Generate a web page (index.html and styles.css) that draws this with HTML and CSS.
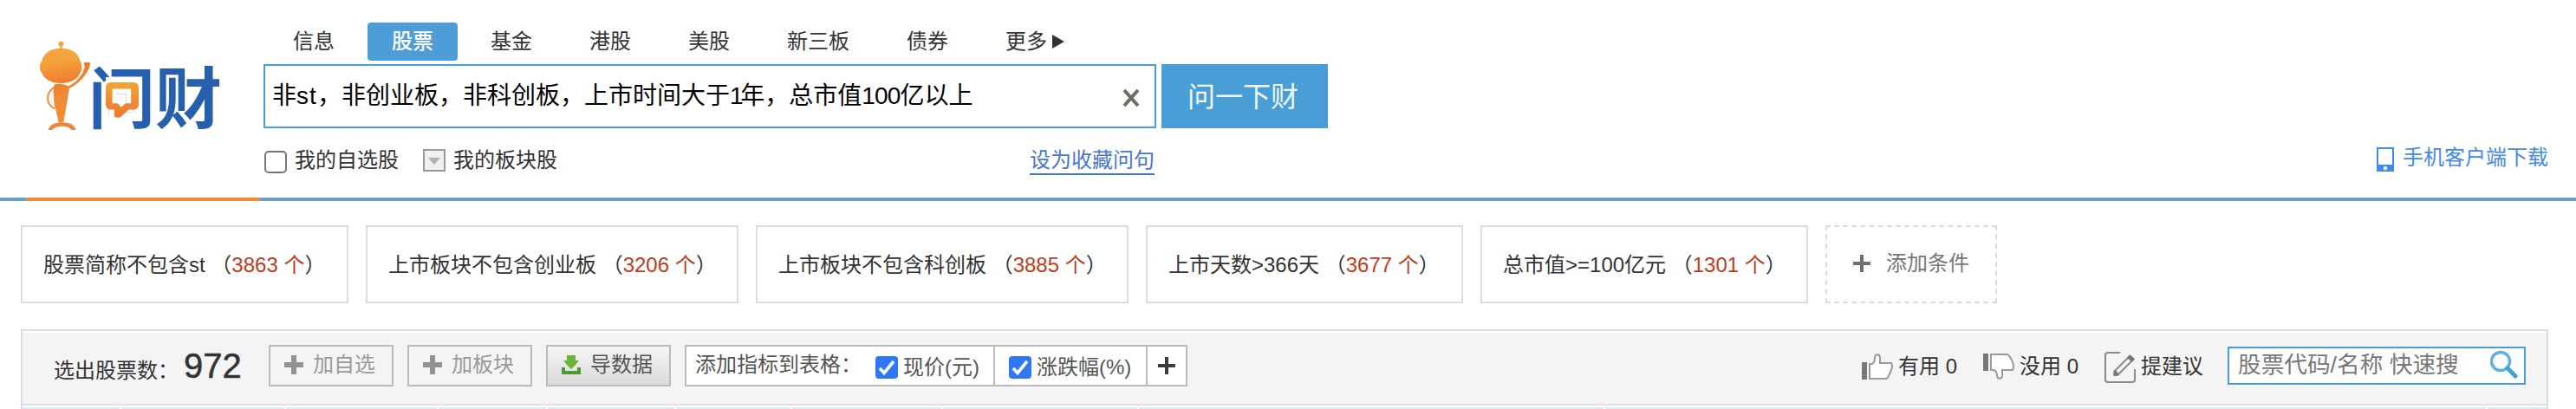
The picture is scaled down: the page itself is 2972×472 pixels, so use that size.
FILE: index.html
```html
<!DOCTYPE html>
<html lang="zh-CN">
<head>
<meta charset="utf-8">
<title>问财</title>
<link rel="stylesheet" href="styles.css">
</head>
<body>
<header class="header">
  <a class="logo">
    <svg class="logo-mascot" viewBox="138 138 180 312">
      <defs>
        <linearGradient id="head" x1="0.4" y1="0" x2="0.6" y2="1"><stop offset="0.35" stop-color="#f4a43a"/><stop offset="1" stop-color="#ef7a30"/></linearGradient>
        <linearGradient id="body" x1="0" y1="0" x2="0.3" y2="1"><stop offset="0.3" stop-color="#ee7a30"/><stop offset="0.6" stop-color="#f28c34"/></linearGradient>
      </defs>
      <circle cx="211" cy="152" r="9" fill="#f4a43a"/>
      <path d="M211 155v16" stroke="#f4a43a" stroke-width="6"/>
      <path d="M144 212C152 182 176 167 211 167s60 15 67 45c7 8 7 32 0 40-10 24-35 36-67 36s-57-12-67-36c-8-8-8-32 0-40z" fill="url(#head)"/>
      <path d="M190 292q26-5 48 6C270 280 290 254 293 230l-3-12q8-5 22-1c0 26-30 70-72 89l-20 118h-18C198 386 184 366 186 330q-4-26 4-38z" fill="url(#body)"/>
      <path d="M190 300c-34 22-32 62 0 76" fill="none" stroke="#f28c34" stroke-width="6"/>
      <path d="M167 450c4-16 22-26 48-26s44 10 48 26h-14c-8-9-18-13-34-13s-28 4-36 13z" fill="#f08633"/>
    </svg>
    <span class="logo-name"><span class="logo-wen">问</span><span class="logo-cai">财</span></span>
    <svg class="logo-bubble" viewBox="366 282 120 130">
      <defs><linearGradient id="bubble" x1="0" y1="0" x2="0" y2="1"><stop offset="0.1" stop-color="#f3a037"/><stop offset="0.9" stop-color="#ee7a30"/></linearGradient></defs>
      <path fill="url(#bubble)" fill-rule="evenodd" d="M386 282h80q20 0 20 20v60q0 20-20 20h-16l-32 28q-21 5-21-10v-18h-11q-20 0-20-20v-60q0-20 20-20zM390 306v53h20l12 14 16-14h20v-53z"/>
    </svg>
  </a>
  <div class="search">
    <nav class="tabs">
      <a class="tab">信息</a><a class="tab tab-active">股票</a><a class="tab">基金</a><a class="tab">港股</a><a class="tab">美股</a><a class="tab">新三板</a><a class="tab">债券</a><a class="tab">更多<i class="tab-arrow"></i></a>
    </nav>
    <div class="search-row">
      <div class="query">
        <span>非<span class="query-latin">st</span>，非创业板，非科创板，上市时间大于<span class="query-one">1</span>年，总市值<span class="query-num">100</span>亿以上</span>
        <svg class="clear" viewBox="0 0 22 22"><path d="M3 2l16 18M19 2L3 20" stroke="#6b6b60" stroke-width="4"/></svg>
      </div>
      <div class="ask">问一下财</div>
    </div>
    <div class="options">
      <i class="box"></i><span class="opt-self">我的自选股</span>
      <i class="drop"></i><span>我的板块股</span>
      <a class="fav">设为收藏问句</a>
    </div>
  </div>
  <a class="mobile">
    <svg class="phone" viewBox="0 0 20 28"><path fill="#4289ee" d="M0 0h20v28H0z"/><path fill="#fff" d="M2 2h16v18H2z"/><circle cx="10" cy="24" r="2.2" fill="#fff"/></svg>手机客户端下载
  </a>
</header>
<div class="rule"><i class="rule-accent"></i></div>

<section class="conditions">
  <div class="cond cond-name">股票简称不包含st&nbsp;（<b>3863 个</b>）</div>
  <div class="cond cond-board">上市板块不包含创业板&nbsp;（<b>3206 个</b>）</div>
  <div class="cond cond-board">上市板块不包含科创板&nbsp;（<b>3885 个</b>）</div>
  <div class="cond cond-days">上市天数&gt;366天&nbsp;（<b>3677 个</b>）</div>
  <div class="cond cond-cap">总市值&gt;=100亿元&nbsp;（<b>1301 个</b>）</div>
  <div class="cond cond-add"><svg class="plus-thin" viewBox="0 0 20 20"><path d="M10 0v20M0 10h20" stroke="#6e6e6e" stroke-width="4"/></svg>添加条件</div>
</section>

<section class="panel">
  <div class="toolbar">
    <span class="count-label">选出股票数：</span><span class="count">972</span>
    <div class="btn btn-off"><svg class="icon" viewBox="0 0 22 22"><path d="M11 0v22M0 11h22" stroke="#929292" stroke-width="6"/></svg>加自选</div>
    <div class="btn btn-off"><svg class="icon" viewBox="0 0 22 22"><path d="M11 0v22M0 11h22" stroke="#929292" stroke-width="6"/></svg>加板块</div>
    <div class="btn btn-export"><svg class="icon" viewBox="0 0 22 22"><path d="M0 14h4v4h14v-4h4v8H0z" fill="#4d9a2c"/><path d="M6 0h10v6h4l-4 5-5 5-5-5-4-5h4z" fill="#6cb53c"/></svg>导数据</div>
    <div class="metrics">
      <div class="metric metric-price"><span class="metric-label">添加指标到表格：</span><svg class="check" viewBox="0 0 26 26"><rect width="26" height="26" rx="4" fill="#2e78f6"/><path d="M5 14l5 5.5L21 6" fill="none" stroke="#fff" stroke-width="3.6"/></svg><span class="metric-name">现价(元)</span></div>
      <div class="metric metric-change"><svg class="check" viewBox="0 0 26 26"><rect width="26" height="26" rx="4" fill="#2e78f6"/><path d="M5 14l5 5.5L21 6" fill="none" stroke="#fff" stroke-width="3.6"/></svg><span class="metric-name">涨跌幅(%)</span></div>
      <div class="metric metric-plus"><svg class="plus-thin" viewBox="0 0 20 20"><path d="M10 0v20M0 10h20" stroke="#3c3c3c" stroke-width="4"/></svg></div>
    </div>
    <div class="feedback">
      <a class="vote"><svg class="thumb" viewBox="0 0 36 30"><path fill="#777" d="M0 10h6v20H0z"/><path fill="#fff" stroke="#9a9a9a" stroke-width="2" d="M9 29V12h3c3-2 3-4 3-7 0-5 6-5 6 0v6h13c2 3 1 5 0 8l-4 9-2 1z"/></svg>有用 0</a>
      <a class="vote"><svg class="thumb" viewBox="0 0 36 30"><path fill="#777" d="M0 0h6v20H0z"/><path fill="#fff" stroke="#9a9a9a" stroke-width="2" d="M9 1h19c3 1 4 5 6 9 1 3 2 6 0 9H22v6c0 5-6 5-6 0 0-3-1-5-4-6H9z"/></svg>没用 0</a>
      <a class="vote vote-edit"><svg class="edit" viewBox="0 0 36 36"><path fill="none" stroke="#8a8a8a" stroke-width="2" d="M18 1H4Q1 1 1 4v28q0 3 3 3h28q3 0 3-3V20"/><path fill="#f4f4f4" stroke="#8a8a8a" stroke-width="2" d="M12 27l-1-4L29 5l4 4-18 18z"/><path fill="#777" d="M10 28l2-8 5 6zM29 3l6 5-3 4-6-5z"/></svg>提建议</a>
    </div>
    <div class="quick"><span>股票代码/名称 快速搜</span><svg class="lens" viewBox="0 0 32 34"><circle cx="12" cy="13" r="10.5" fill="none" stroke="#5fb0e2" stroke-width="3.4"/><path d="M20 21l9 9" stroke="#459fda" stroke-width="5" stroke-linecap="round"/></svg></div>
  </div>
  <div class="thead"><i></i><i></i><i></i><i></i><i></i><i></i><i></i><i></i><i></i><i></i><i></i></div>
</section>
</body>
</html>
```

FILE: styles.css
```css
* { box-sizing: border-box; }
body {
  margin: 0;
  height: 472px;
  overflow: hidden;
  background: #fff;
  color: #333;
  font: 24px/36px "Liberation Sans", "Noto Sans CJK SC", sans-serif;
  white-space: nowrap;
}
svg { display: block; flex: none; }
i { display: block; flex: none; }

.header { display: flex; height: 228px; }
.logo { position: relative; display: flex; width: 304px; padding: 46px 0 0 46px; }
.logo-mascot { width: 60px; height: 104px; }
.logo-name {
  margin: 11px 0 0 -4px;
  font: 700 77px/104px "Noto Sans CJK SC", sans-serif;
  height: 104px;
  color: #2660ad;
}
/* The middle of the first character is left blank for the speech bubble. */
.logo-wen {
  background: linear-gradient(#fff, #fff) 20px 36px / 37px 49px no-repeat, #2660ad;
  -webkit-background-clip: text;
  background-clip: text;
  color: transparent;
}
.logo-bubble { position: absolute; left: 122px; top: 94px; width: 38px; height: 43px; }

.search { width: 1228px; padding-top: 26px; }
.tabs { display: flex; gap: 10px; padding-left: 6px; height: 44px; }
.tab { display: flex; align-items: center; padding: 0 28px; height: 44px; border-radius: 4px; }
.tab-active { background: #4f9dd7; color: #fff; font-weight: 500; }
.tab-arrow {
  margin-left: 6px;
  border-left: 14px solid #333;
  border-top: 8px solid transparent;
  border-bottom: 8px solid transparent;
}
.search-row { display: flex; gap: 6px; margin-top: 4px; height: 74px; }
.query {
  display: flex;
  align-items: center;
  justify-content: space-between;
  width: 1030px;
  padding: 0 16px 0 8px;
  border: 2px solid #499ed6;
  color: #000;
  font-size: 28px;
}
.query-latin { letter-spacing: 1.1px; }
.query-one { letter-spacing: -3.4px; }
.query-num { letter-spacing: -0.8px; }
.clear { width: 22px; height: 22px; margin-top: 4px; }
.ask {
  width: 192px;
  padding-right: 4px;
  background: #499ed6;
  color: #f0f8fd;
  font: 32px/70px "Noto Sans CJK SC", sans-serif;
  text-align: center;
}
.options { display: flex; align-items: center; height: 36px; margin-top: 19px; }
.box { width: 26px; height: 26px; margin: 4px 9px 0 1px; border: 2px solid #767676; border-radius: 5px; }
.opt-self { width: 148px; }
.drop {
  width: 26px;
  height: 26px;
  margin-right: 9px;
  padding: 8px 4px;
  border: 2px solid #999;
  background: #f0f0f0;
}
.drop::after {
  content: "";
  display: block;
  border-top: 8px solid #adb2b6;
  border-left: 7px solid transparent;
  border-right: 7px solid transparent;
}
.fav { margin-left: 545px; height: 34px; border-bottom: 2px solid #4677cc; color: #4677cc; line-height: 34px; }
.mobile {
  display: flex;
  gap: 10px;
  margin-left: auto;
  padding: 164px 32px 0 0;
  color: #4289ee;
}
.phone { width: 20px; height: 28px; margin-top: 6px; }
.rule { height: 4px; padding-left: 30px; background: #66a0cd; }
.rule-accent { width: 270px; height: 4px; background: #f28a33; }

.conditions { display: flex; gap: 20px; padding: 28px 24px 0; }
.cond {
  display: flex;
  align-items: center;
  height: 90px;
  padding: 2px 0 0 24px;
  border: 2px solid #dcdcdc;
}
.cond b { font-weight: 400; color: #c23a17; }
.cond-name { width: 378px; }
.cond-board { width: 430px; }
.cond-days { width: 366px; }
.cond-cap { width: 378px; }
.cond-add { width: 198px; gap: 18px; padding: 0 0 2px 30px; border-style: dashed; color: #777; }
.plus-thin { width: 20px; height: 20px; }

.panel {
  width: 2916px;
  height: 92px;
  margin: 30px 0 0 24px;
  border: 2px solid #dcdcdc;
  border-bottom: 0;
}
.toolbar {
  display: flex;
  height: 84px;
  margin-top: 2px;
  padding: 14px 24px 0 36px;
  background: #f4f4f4;
  border-bottom: 2px solid #e0e0e0;
}
.count-label { width: 150px; padding-top: 12px; }
.count { width: 98px; font-size: 40px; line-height: 48px; -webkit-text-stroke: 0.5px #333; }
.btn {
  display: flex;
  align-items: center;
  gap: 11px;
  width: 144px;
  height: 48px;
  margin-right: 16px;
  padding: 0 0 2px 16px;
  border: 2px solid #bbb;
}
.btn-off { color: #999; }
.btn-export { background: linear-gradient(#f6f6f6, #d9d9d9); color: #555; }
.icon { width: 22px; height: 22px; }
.metrics { display: flex; width: 580px; height: 48px; border: 2px solid #bbb; background: #fff; color: #555; }
.metric { display: flex; align-items: center; border-right: 2px solid #bbb; }
.metric-price { width: 356px; padding-left: 10px; }
.metric-label { width: 208px; padding-bottom: 2px; }
.metric-change { width: 176px; padding-left: 16px; }
.metric-plus { width: 44px; padding: 0 0 0 12px; border: 0; }
.check { width: 26px; height: 26px; margin: 4px 6px 0 0; }
.metric-name { padding-top: 3px; }
.feedback { display: flex; margin-left: 778px; }
.vote { display: flex; align-items: center; gap: 6px; width: 140px; height: 50px; }
.thumb { width: 36px; height: 30px; }
.edit { width: 36px; height: 36px; margin-top: 2px; }
.vote-edit { width: 142px; }
.quick {
  display: flex;
  align-items: center;
  justify-content: space-between;
  width: 344px;
  height: 44px;
  margin-top: 2px;
  padding: 0 7px 2px 10px;
  border: 2px solid #499ed6;
  background: #fff;
  color: #777;
  font-size: 26.67px;
}
.lens { width: 32px; height: 34px; }
.thead {
  display: grid;
  grid-template-columns: 112px 188px 174px 124px 146px 132px 172px 224px 536px 1016px 68px;
  column-gap: 2px;
  margin-top: 2px;
  height: 2px;
}
.thead i { background: #d7ebf5; }
```
